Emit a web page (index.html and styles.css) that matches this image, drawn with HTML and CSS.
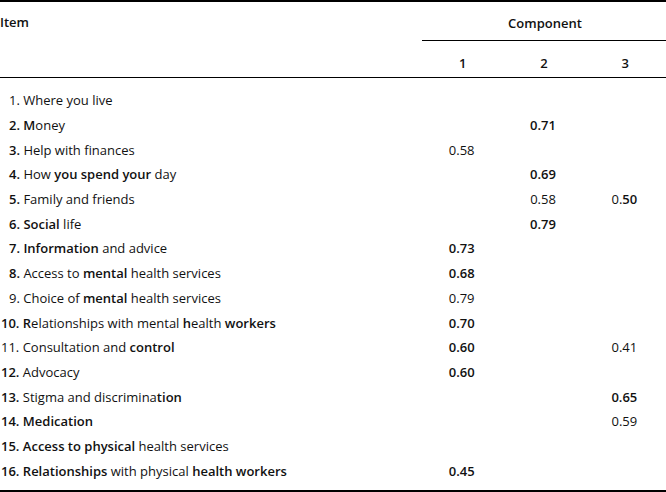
FILE: index.html
```html
<!DOCTYPE html>
<html lang="en">
<head>
<meta charset="utf-8">
<title>Component loadings</title>
<link rel="stylesheet" href="styles.css">
</head>
<body>
<table class="loadings">
  <thead>
    <tr class="head-top">
      <th class="item-head" rowspan="2">Item</th>
      <th class="comp-head" colspan="3"><span>Component</span></th>
    </tr>
    <tr class="head-nums">
      <th class="num">1</th>
      <th class="num">2</th>
      <th class="num">3</th>
    </tr>
  </thead>
  <tbody>
    <tr class="first"><td class="item pad">1. Where you live</td><td class="v"></td><td class="v"></td><td class="v"></td></tr>
    <tr><td class="item pad"><b>2. M</b>oney</td><td class="v"></td><td class="v"><b>0.71</b></td><td class="v"></td></tr>
    <tr><td class="item pad"><b>3.</b> Help with finances</td><td class="v">0.58</td><td class="v"></td><td class="v"></td></tr>
    <tr><td class="item pad"><b>4.</b> How <b>you spend your</b> day</td><td class="v"></td><td class="v"><b>0.69</b></td><td class="v"></td></tr>
    <tr><td class="item pad"><b>5.</b> Family and friends</td><td class="v"></td><td class="v">0.58</td><td class="v">0.<b>50</b></td></tr>
    <tr><td class="item pad"><b>6.</b> <b>Social</b> life</td><td class="v"></td><td class="v"><b>0.79</b></td><td class="v"></td></tr>
    <tr><td class="item pad"><b>7.</b> <b>Information</b> and advice</td><td class="v"><b>0.73</b></td><td class="v"></td><td class="v"></td></tr>
    <tr><td class="item pad"><b>8.</b> Access to <b>mental</b> health services</td><td class="v"><b>0.68</b></td><td class="v"></td><td class="v"></td></tr>
    <tr><td class="item pad">9. Choice of <b>mental</b> health services</td><td class="v">0.79</td><td class="v"></td><td class="v"></td></tr>
    <tr><td class="item"><b>10. R</b>elationships with mental <b>h</b>ealth <b>workers</b></td><td class="v"><b>0.70</b></td><td class="v"></td><td class="v"></td></tr>
    <tr><td class="item">11. Consultation and <b>control</b></td><td class="v"><b>0.60</b></td><td class="v"></td><td class="v">0.41</td></tr>
    <tr><td class="item"><b>12.</b> Advocacy</td><td class="v"><b>0.60</b></td><td class="v"></td><td class="v"></td></tr>
    <tr><td class="item"><b>13.</b> Stigma and discrimina<b>tion</b></td><td class="v"></td><td class="v"></td><td class="v"><b>0.65</b></td></tr>
    <tr><td class="item"><b>14.</b> <b>Medication</b></td><td class="v"></td><td class="v"></td><td class="v">0.59</td></tr>
    <tr><td class="item"><b>15.</b> <b>Access to physical</b> health services</td><td class="v"></td><td class="v"></td><td class="v"></td></tr>
    <tr class="last"><td class="item"><b>16.</b> <b>Relationships</b> with physical <b>health workers</b></td><td class="v"><b>0.45</b></td><td class="v"></td><td class="v"></td></tr>
  </tbody>
</table>
</body>
</html>
```

FILE: styles.css
```css
html, body {
  margin: 0;
  padding: 0;
  background: #ffffff;
}

body {
  font-family: "Open Sans", "Lato", "Liberation Sans", sans-serif;
  font-size: 13px;
  line-height: 18px;
  color: #111111;
}

.loadings {
  width: 666px;
  border-collapse: collapse;
  border-top: 2px solid #000;
  border-bottom: 3px solid #000;
  table-layout: fixed;
}

.loadings b {
  font-weight: 600;
}

.item-head {
  width: 422px;
  text-align: left;
  vertical-align: top;
  font-weight: 600;
  padding: 11px 0 0 0;
  border-bottom: 1px solid #000;
}

.comp-head {
  height: 38px;
  padding: 0;
  font-weight: 600;
  text-align: center;
  vertical-align: top;
  border-bottom: 1px solid #000;
}

.comp-head span {
  display: block;
  padding-top: 12px;
  padding-left: 2px;
}

.head-nums .num {
  width: 81px;
  height: 36px;
  padding: 0;
  font-weight: 600;
  text-align: center;
  vertical-align: top;
  border-bottom: 1px solid #000;
}

.head-nums .num::before {
  content: "";
  display: block;
  height: 13px;
}

.loadings td {
  height: 24.7px;
  padding: 0;
  vertical-align: middle;
  white-space: nowrap;
}

.loadings td.item {
  padding-left: 1px;
}

.loadings td.item.pad {
  padding-left: 9px;
}

.loadings td.v {
  text-align: center;
  padding-right: 2px;
}

.loadings tr.first td {
  padding-top: 10px;
}

.loadings tr.last td {
  padding-bottom: 7px;
}
```
